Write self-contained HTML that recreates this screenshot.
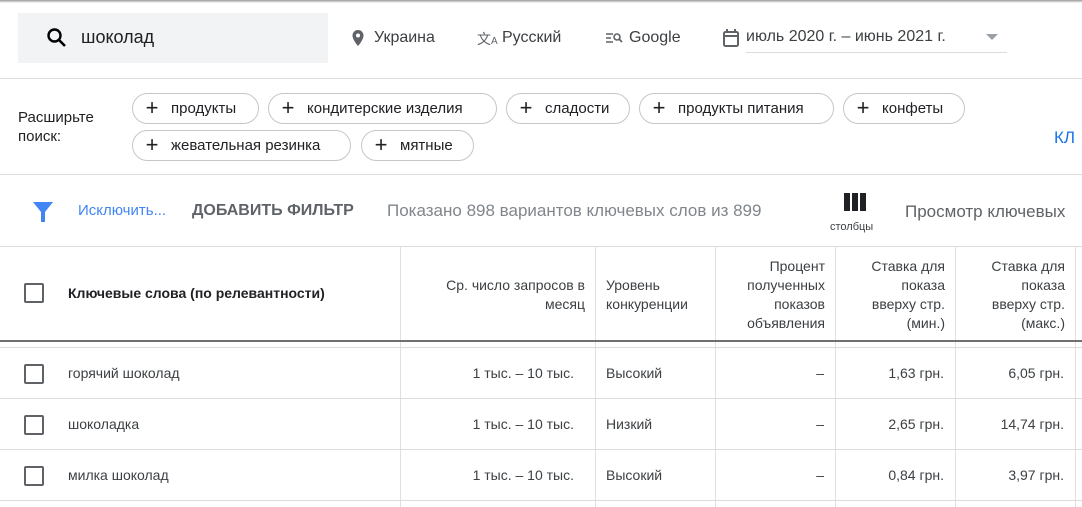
<!DOCTYPE html>
<html><head><meta charset="utf-8"><style>
body{margin:0;width:1082px;height:507px;overflow:hidden;background:#fff;font-family:"Liberation Sans",Arial,sans-serif;color:#202124;position:relative}
.a{position:absolute;white-space:nowrap}
.hl{position:absolute;left:0;width:1082px;height:1px;background:#dadce0}
.chip{position:absolute;height:29px;border:1px solid #c4c7c5;border-radius:16px;font-size:15px;line-height:30px;padding:0 14px 0 8px;box-sizing:content-box}
.chip b{font-weight:normal;font-size:22px;display:inline-block;width:22px;vertical-align:top;margin-right:8px;text-align:center;line-height:28px}
.vl{position:absolute;width:1px;background:#e0e0e0;top:247px;height:260px}
.cb{position:absolute;left:24px;width:16px;height:16px;border:2px solid #5f6368;border-radius:2px}
.th{position:absolute;font-size:14px;font-weight:normal;color:#3c4043;line-height:19px;text-align:right}
.td{position:absolute;font-size:14px;color:#3c4043}
</style></head><body>
<div class="a" style="left:0;top:0;width:1082px;height:3px;background:linear-gradient(#999,#fff)"></div>
<div class="a" style="left:18px;top:13px;width:310px;height:50px;background:#f1f3f4"></div>
<svg class="a" style="left:45px;top:26px" width="24" height="24" viewBox="0 0 24 24"><circle cx="9.5" cy="9.5" r="6" fill="none" stroke="#000" stroke-width="2.4"/><path d="M14 14l6 6" stroke="#000" stroke-width="2.6"/></svg>
<div class="a" style="left:81px;top:27px;font-size:18px">шоколад</div>
<svg class="a" style="left:350px;top:29px" width="16" height="18" viewBox="0 0 16 18"><path d="M8 1a5.5 5.5 0 0 0-5.5 5.5C2.5 11 8 17 8 17s5.5-6 5.5-10.5A5.5 5.5 0 0 0 8 1z" fill="#5f6368"/><circle cx="8" cy="6.5" r="2" fill="#fff"/></svg>
<div class="a" style="left:374px;top:29px;font-size:16px;color:#3c4043">Украина</div>
<div class="a" style="left:477px;top:29px;font-size:14px;color:#5f6368">文<span style="font-size:10px">A</span></div>
<div class="a" style="left:502px;top:29px;font-size:16px;color:#3c4043">Русский</div>
<svg class="a" style="left:605px;top:31px" width="18" height="14" viewBox="0 0 18 14"><path d="M1 3h7M1 7h5M1 11h7" stroke="#5f6368" stroke-width="1.6"/><circle cx="12" cy="6" r="3" fill="none" stroke="#5f6368" stroke-width="1.6"/><path d="M14 8l3 3" stroke="#5f6368" stroke-width="1.8"/></svg>
<div class="a" style="left:629px;top:29px;font-size:16px;color:#3c4043">Google</div>
<svg class="a" style="left:722px;top:28px" width="18" height="20" viewBox="0 0 18 20"><rect x="2" y="4" width="14" height="14" rx="1.5" fill="none" stroke="#5f6368" stroke-width="2"/><path d="M2 8h14M5 1v4M13 1v4" stroke="#5f6368" stroke-width="2"/></svg>
<div class="a" style="left:746px;top:28px;font-size:16px;color:#3c4043">июль 2020 г. – июнь 2021 г.</div>
<div class="a" style="left:746px;top:52px;width:261px;height:1px;background:#dadce0"></div>
<div class="a" style="left:986px;top:34px;width:0;height:0;border-left:6px solid transparent;border-right:6px solid transparent;border-top:6px solid #9aa0a6"></div>
<div class="hl" style="top:78px"></div>
<div class="a" style="left:18px;top:108px;font-size:15px;line-height:19px">Расширьте<br>поиск:</div>
<div class="chip" style="left:132px;top:93px;width:103px"><b>+</b>продукты</div>
<div class="chip" style="left:268px;top:93px;width:205px"><b>+</b>кондитерские изделия</div>
<div class="chip" style="left:506px;top:93px;width:100px"><b>+</b>сладости</div>
<div class="chip" style="left:639px;top:93px;width:171px"><b>+</b>продукты питания</div>
<div class="chip" style="left:843px;top:93px;width:98px"><b>+</b>конфеты</div>
<div class="chip" style="left:132px;top:130px;width:195px"><b>+</b>жевательная резинка</div>
<div class="chip" style="left:361px;top:130px;width:89px"><b>+</b>мятные</div>
<div class="a" style="left:1054px;top:128px;font-size:17px;color:#1a73e8">КЛ</div>
<div class="hl" style="top:174px"></div>
<svg class="a" style="left:32px;top:201px" width="22" height="22" viewBox="0 0 22 22"><path d="M1 1h20l-8 10v10h-4V11z" fill="#4285f4"/></svg>
<div class="a" style="left:78px;top:202px;font-size:15px;color:#4285f4">Исключить...</div>
<div class="a" style="left:192px;top:202px;font-size:16px;font-weight:bold;color:#5f6368">ДОБАВИТЬ ФИЛЬТР</div>
<div class="a" style="left:387px;top:201px;font-size:17px;color:#80868b">Показано 898 вариантов ключевых слов из 899</div>
<svg class="a" style="left:843px;top:193px" width="24" height="19" viewBox="0 0 24 19"><rect x="1" width="6" height="18" fill="#202124"/><rect x="9" width="6" height="18" fill="#202124"/><rect x="17" width="6" height="18" fill="#202124"/></svg>
<div class="a" style="left:830px;top:221px;font-size:11px;color:#3c4043">столбцы</div>
<div class="a" style="left:905px;top:202px;font-size:17px;color:#5f6368">Просмотр ключевых</div>
<div class="hl" style="top:246px"></div>
<div class="vl" style="left:400px"></div><div class="vl" style="left:595px"></div><div class="vl" style="left:715px"></div><div class="vl" style="left:835px"></div><div class="vl" style="left:955px"></div><div class="vl" style="left:1075px"></div>
<div class="cb" style="top:283px"></div>
<div class="a" style="left:68px;top:285px;font-size:14px;font-weight:bold;color:#202124">Ключевые слова (по релевантности)</div>
<div class="th" style="left:405px;width:180px;top:276px">Ср. число запросов в<br>месяц</div>
<div class="th" style="left:606px;top:276px;text-align:left">Уровень<br>конкуренции</div>
<div class="th" style="left:720px;width:105px;top:257px">Процент<br>полученных<br>показов<br>объявления</div>
<div class="th" style="left:840px;width:105px;top:257px">Ставка для<br>показа<br>вверху стр.<br>(мин.)</div>
<div class="th" style="left:960px;width:105px;top:257px">Ставка для<br>показа<br>вверху стр.<br>(макс.)</div>
<div class="a" style="left:0;top:340px;width:1082px;height:2px;background:#707070"></div>
<div class="hl" style="top:347px"></div>
<div class="hl" style="top:398px"></div>
<div class="hl" style="top:449px"></div>
<div class="hl" style="top:500px"></div>
<div class="cb" style="top:364px"></div><div class="td" style="left:68px;top:365px">горячий шоколад</div>
<div class="td" style="left:405px;width:169px;text-align:right;top:365px">1 тыс. – 10 тыс.</div><div class="td" style="left:606px;top:365px">Высокий</div>
<div class="td" style="left:720px;width:104px;text-align:right;top:365px">–</div><div class="td" style="left:840px;width:104px;text-align:right;top:365px">1,63 грн.</div><div class="td" style="left:960px;width:104px;text-align:right;top:365px">6,05 грн.</div>
<div class="cb" style="top:415px"></div><div class="td" style="left:68px;top:416px">шоколадка</div>
<div class="td" style="left:405px;width:169px;text-align:right;top:416px">1 тыс. – 10 тыс.</div><div class="td" style="left:606px;top:416px">Низкий</div>
<div class="td" style="left:720px;width:104px;text-align:right;top:416px">–</div><div class="td" style="left:840px;width:104px;text-align:right;top:416px">2,65 грн.</div><div class="td" style="left:960px;width:104px;text-align:right;top:416px">14,74 грн.</div>
<div class="cb" style="top:466px"></div><div class="td" style="left:68px;top:467px">милка шоколад</div>
<div class="td" style="left:405px;width:169px;text-align:right;top:467px">1 тыс. – 10 тыс.</div><div class="td" style="left:606px;top:467px">Высокий</div>
<div class="td" style="left:720px;width:104px;text-align:right;top:467px">–</div><div class="td" style="left:840px;width:104px;text-align:right;top:467px">0,84 грн.</div><div class="td" style="left:960px;width:104px;text-align:right;top:467px">3,97 грн.</div>
</body></html>
